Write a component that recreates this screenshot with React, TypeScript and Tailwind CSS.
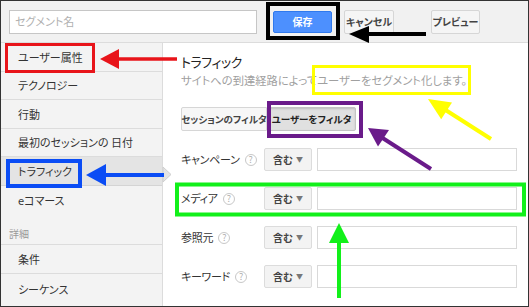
import React from "react";

const items1 = [
  { t: "ユーザー属性", h: "h-[29px]" },
  { t: "テクノロジー", h: "h-[28px]" },
  { t: "行動", h: "h-[29px]" },
  { t: "最初のセッションの 日付", h: "h-[28px]" },
];

function Help() {
  return (
    <span className="inline-flex items-center justify-center w-[12px] h-[12px] rounded-full border border-[#c8c8c8] text-[9px] leading-none text-[#b0b0b0]">
      ?
    </span>
  );
}

function Row({ label }: { label: string }) {
  return (
    <div className="flex items-center h-[23px]">
      <div className="w-[83px] flex items-center gap-[5px] text-[11px] tracking-[-0.3px] text-[#333] whitespace-nowrap">
        <span>{label}</span>
        <Help />
      </div>
      <div className="w-[48px] h-[23px] flex items-center justify-between pl-[8px] pr-[8px] bg-[#f3f3f3] border border-[#dcdcdc] rounded-[2px] text-[10px] font-bold text-[#444] whitespace-nowrap">
        <span>含む</span>
        <span className="text-[7px] text-[#777]">▼</span>
      </div>
      <div className="ml-[5px] w-[200px] h-[23px] bg-white border border-[#d9d9d9]" />
    </div>
  );
}

export default function App() {
  return (
    <div className="relative w-[529px] h-[307px] overflow-hidden border border-[#333] bg-white font-['Noto_Sans_CJK_JP',sans-serif] [font-feature-settings:'palt']">
      {/* top bar */}
      <div className="h-[42px] bg-[#f1f1f1] border-b border-[#dcdcdc] flex items-center pl-[8px]">
        <div className="w-[248px] h-[24px] bg-white border border-[#c6c6c6] flex items-center pl-[5px] text-[11px] text-[#b0b0b0]">
          セグメント名
        </div>
        <div className="ml-[16px] w-[59px] h-[22px] bg-[#4d90fe] border border-[#3079ed] rounded-[2px] flex items-center justify-center text-[10px] font-bold text-white whitespace-nowrap">
          保存
        </div>
        <div className="ml-[12px] w-[50px] h-[24px] bg-[#f5f5f5] border border-[#d6d6d6] rounded-[2px] flex items-center justify-center text-[10px] font-bold text-[#444] whitespace-nowrap">
          キャンセル
        </div>
        <div className="ml-[37px] w-[49px] h-[24px] bg-[#f5f5f5] border border-[#d6d6d6] rounded-[2px] flex items-center justify-center text-[10px] font-bold text-[#444] whitespace-nowrap">
          プレビュー
        </div>
      </div>

      <div className="flex h-[263px]">
        {/* sidebar */}
        <div className="w-[162px] bg-[#f3f3f3] border-r border-[#dcdcdc] flex flex-col text-[11px] text-[#333] whitespace-nowrap">
          {items1.map((it) => (
            <div key={it.t} className={`${it.h} border-b border-[#dcdcdc] flex items-center pl-[17px]`}>
              {it.t}
            </div>
          ))}
          <div className="h-[29px] bg-[#e4e4e4] border-b border-[#d4d4d4] flex items-center pl-[17px]">
            トラフィック
          </div>
          <div className="h-[28px] flex items-center pl-[17px]">eコマース</div>
          <div className="h-[31px] flex items-end pl-[8px] pb-[3px] text-[10px] text-[#999] border-b border-[#dcdcdc]">
            詳細
          </div>
          <div className="h-[29px] border-b border-[#dcdcdc] flex items-center pl-[17px]">条件</div>
          <div className="h-[30px] flex items-center pl-[17px]">シーケンス</div>
        </div>

        {/* content */}
        <div className="flex-1 flex flex-col pl-[18px] whitespace-nowrap">
          <div className="mt-[9px] text-[13px] tracking-[-0.5px] leading-[20px] text-[#222]">トラフィック</div>
          <div className="text-[11.3px] leading-[16px] text-[#a0a0a0]">
            サイトへの到達経路によってユーザーをセグメント化します。
          </div>
          <div className="mt-[19px] flex h-[24px]">
            <div className="w-[86px] h-[24px] bg-[#f7f7f7] border border-[#d6d6d6] rounded-l-[2px] flex items-center justify-center text-[9.5px] font-bold text-[#444]">
              セッションのフィルタ
            </div>
            <div className="w-[89px] h-[24px] bg-[#e0e0e0] border border-[#c4c4c4] rounded-r-[2px] shadow-[inset_0_1px_2px_rgba(0,0,0,0.15)] flex items-center justify-center text-[9.5px] font-bold text-[#222]">
              ユーザーをフィルタ
            </div>
          </div>
          <div className="mt-[17px] flex flex-col gap-[16px]">
            <Row label="キャンペーン" />
            <Row label="メディア" />
            <Row label="参照元" />
            <Row label="キーワード" />
          </div>
        </div>
      </div>

      {/* annotations */}
      <svg className="absolute left-0 top-0" width="529" height="307" viewBox="0 0 529 307">
        <polygon points="162,166 170,173.5 162,181" fill="#e4e4e4" stroke="#cfcfcf" strokeWidth="1" />
        <rect x="5.5" y="43.5" width="87" height="27" fill="none" stroke="#e8141a" strokeWidth="3" />
        <line x1="116" y1="58" x2="176" y2="58" stroke="#e8141a" strokeWidth="3.5" />
        <polygon points="99,58 118,48 118,68" fill="#e8141a" />
        <rect x="267" y="3" width="70" height="34" fill="none" stroke="#000" strokeWidth="4" />
        <line x1="366" y1="33" x2="425" y2="33" stroke="#000" strokeWidth="4" />
        <polygon points="348,33 368,25 368,42" fill="#000" />
        <rect x="312.5" y="65.5" width="156" height="27" fill="none" stroke="#ffff00" strokeWidth="3" />
        <line x1="443" y1="108" x2="490" y2="138" stroke="#ffff00" strokeWidth="4" />
        <polygon points="427,98 440.2,118.2 451,101.4" fill="#ffff00" />
        <rect x="268" y="102" width="92" height="33" fill="none" stroke="#6a1b8a" strokeWidth="4" />
        <line x1="380" y1="136" x2="430" y2="168" stroke="#6a1b8a" strokeWidth="4" />
        <polygon points="367,127 377,145.5 388,129" fill="#6a1b8a" />
        <rect x="7" y="160" width="72" height="25" fill="none" stroke="#0a4cf5" strokeWidth="4" />
        <line x1="103" y1="174" x2="163" y2="174" stroke="#0a4cf5" strokeWidth="4" />
        <polygon points="85,174 105,163 105,185" fill="#0a4cf5" />
        <rect x="176" y="183.5" width="347" height="30" fill="none" stroke="#12f01a" strokeWidth="4" />
        <line x1="338" y1="240" x2="338" y2="297" stroke="#12f01a" strokeWidth="4" />
        <polygon points="338,222 328,242 348,242" fill="#12f01a" />
      </svg>
    </div>
  );
}
